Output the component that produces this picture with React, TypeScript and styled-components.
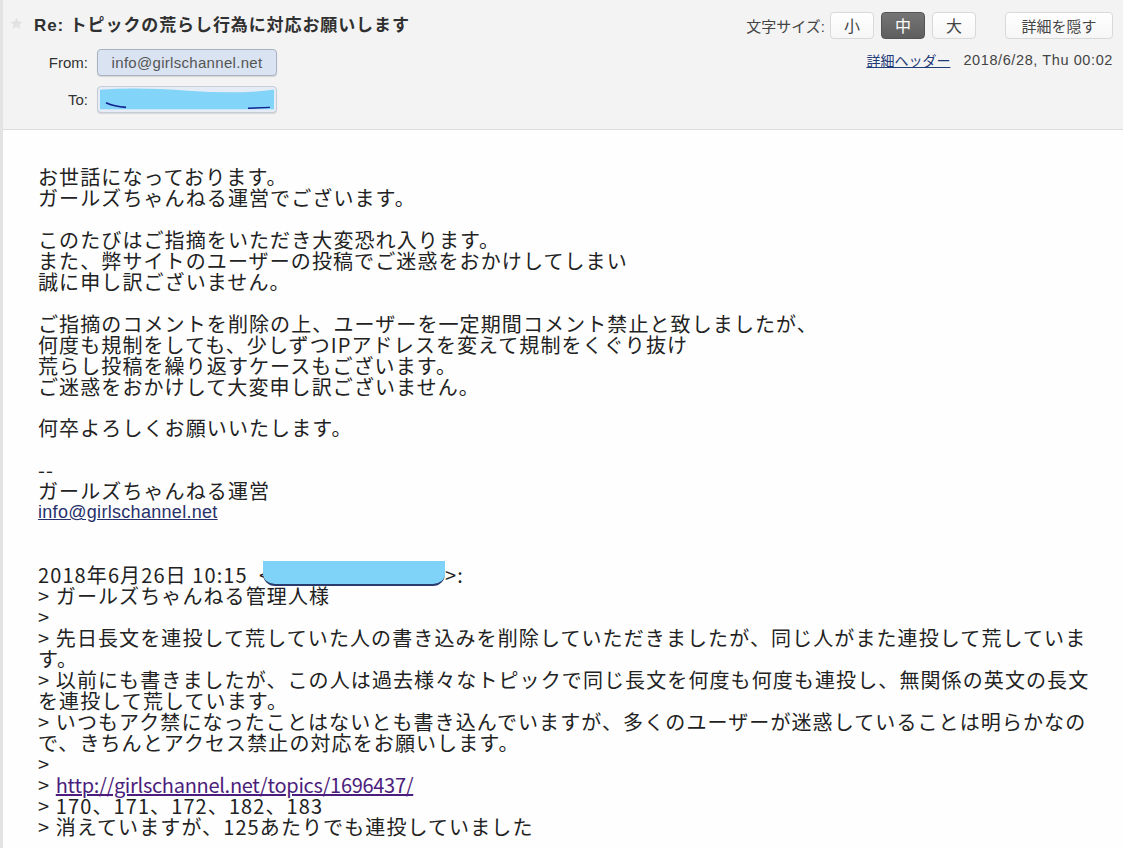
import styled, { createGlobalStyle } from "styled-components"

const GlobalStyle = createGlobalStyle`
  html, body {
    margin: 0;
    padding: 0;
    background: #fefefe;
  }
  body {
    font-family: "Liberation Sans", "Noto Sans CJK JP", sans-serif;
    color: #333;
  }
`

type SizeButtonProps = {
  $active?: boolean
}

const Star = () => (
  <StarIcon viewBox="0 0 24 24">
    <path d="M12 2.5l2.9 6.3 6.8.7-5.1 4.6 1.5 6.7L12 17.3l-6.1 3.5 1.5-6.7-5.1-4.6 6.8-.7z" />
  </StarIcon>
)

const Redaction = () => (
  <RedactSvg viewBox="0 0 178 27" preserveAspectRatio="none">
    <path d="M2 3 Q 40 0 90 4 T 176 3 L 176 24 L 2 24 Z" fill="#82d4f8" />
    <path d="M8 17 Q 16 21 28 22" stroke="#13248f" strokeWidth="2" fill="none" />
    <path d="M150 23 L 172 22" stroke="#13248f" strokeWidth="1.5" fill="none" />
  </RedactSvg>
)

export default function App() {
  return (
    <>
      <GlobalStyle />
      <Frame>
        <Header>
          <HeaderLeft>
            <TitleRow>
              <Star />
              <Title>Re: トピックの荒らし行為に対応お願いします</Title>
            </TitleRow>
            <Fields>
              <Label>From:</Label>
              <Pill>info@girlschannel.net</Pill>
              <Label>To:</Label>
              <Pill $redacted>
                <Redaction />
              </Pill>
            </Fields>
          </HeaderLeft>

          <HeaderRight>
            <Controls>
              <SizeLabel>文字サイズ:</SizeLabel>
              <SizeButton>小</SizeButton>
              <SizeButton $active>中</SizeButton>
              <SizeButton>大</SizeButton>
              <HideButton>詳細を隠す</HideButton>
            </Controls>
            <Meta>
              <HeaderLink>詳細ヘッダー</HeaderLink>
              <DateText>2018/6/28, Thu 00:02</DateText>
            </Meta>
          </HeaderRight>
        </Header>

        <Body>
          <Text>{`お世話になっております。
ガールズちゃんねる運営でございます。

このたびはご指摘をいただき大変恐れ入ります。
また、弊サイトのユーザーの投稿でご迷惑をおかけしてしまい
誠に申し訳ございません。

ご指摘のコメントを削除の上、ユーザーを一定期間コメント禁止と致しましたが、
何度も規制をしても、少しずつIPアドレスを変えて規制をくぐり抜け
荒らし投稿を繰り返すケースもございます。
ご迷惑をおかけして大変申し訳ございません。

何卒よろしくお願いいたします。

--
ガールズちゃんねる運営`}</Text>
          <SignatureMail>info@girlschannel.net</SignatureMail>
          <Text>{`

2018年6月26日 10:15  <`}<Hidden>sample@example.co.jp</Hidden>{`>:
> ガールズちゃんねる管理人様
>
> 先日長文を連投して荒していた人の書き込みを削除していただきましたが、同じ人がまた連投して荒していま
す。
> 以前にも書きましたが、この人は過去様々なトピックで同じ長文を何度も何度も連投し、無関係の英文の長文
を連投して荒しています。
> いつもアク禁になったことはないとも書き込んでいますが、多くのユーザーが迷惑していることは明らかなの
で、きちんとアクセス禁止の対応をお願いします。
>
> `}<QuoteLink>http://girlschannel.net/topics/1696437/</QuoteLink>{`
> 170、171、172、182、183
> 消えていますが、125あたりでも連投していました`}</Text>
        </Body>
      </Frame>
    </>
  )
}

const Frame = styled.div`
  min-height: 848px;
  border-left: 3px solid #e3e3e3;
  box-sizing: border-box;
  background: #fefefe;
`

const Header = styled.header`
  height: 130px;
  box-sizing: border-box;
  background: #f3f3f3;
  border-bottom: 1px solid #dcdcdc;
  display: flex;
  justify-content: space-between;
  align-items: flex-start;
  padding: 10px 10px 0 6px;
`

const HeaderLeft = styled.div`
  display: flex;
  flex-direction: column;
`

const TitleRow = styled.div`
  display: flex;
  align-items: center;
  gap: 10px;
  height: 26px;
`

const StarIcon = styled.svg`
  width: 15px;
  height: 15px;
  fill: #e2e2e2;
`

const Title = styled.h1`
  margin: 0;
  font-size: 17px;
  font-weight: bold;
  color: #303030;
  letter-spacing: 0.9px;
`

const Fields = styled.div`
  display: grid;
  grid-template-columns: 79px 180px;
  column-gap: 9px;
  row-gap: 10px;
  margin-top: 13px;
  align-items: center;
`

const Label = styled.span`
  text-align: right;
  font-size: 15px;
  color: #333;
`

const Pill = styled.div<{ $redacted?: boolean }>`
  position: relative;
  height: 27px;
  box-sizing: border-box;
  border: 1px solid ${(p) => (p.$redacted ? "#c6ccd8" : "#a9b2c2")};
  border-radius: 4px;
  background: ${(p) => (p.$redacted ? "#e6ecf6" : "#d9e3f1")};
  box-shadow: 0 1px 1px rgba(0, 0, 0, 0.12);
  color: #555;
  font-size: 15px;
  letter-spacing: 0.3px;
  display: flex;
  align-items: center;
  justify-content: center;
  overflow: hidden;
`

const RedactSvg = styled.svg`
  position: absolute;
  inset: 0;
  width: 100%;
  height: 100%;
`

const HeaderRight = styled.div`
  display: flex;
  flex-direction: column;
  align-items: flex-end;
`

const Controls = styled.div`
  display: flex;
  align-items: center;
  gap: 7px;
  height: 30px;
`

const SizeLabel = styled.span`
  font-size: 15px;
  color: #444;
  margin-right: -2px;
`

const SizeButton = styled.button<SizeButtonProps>`
  width: 44px;
  height: 27px;
  border-radius: 4px;
  font-family: "Noto Sans CJK JP", sans-serif;
  font-size: 16px;
  padding: 0;
  line-height: 1;
  border: 1px solid ${(p) => (p.$active ? "#555" : "#d9d9d9")};
  background: ${(p) =>
    p.$active ? "linear-gradient(#757575, #5e5e5e)" : "linear-gradient(#ffffff, #f6f6f6)"};
  color: ${(p) => (p.$active ? "#fff" : "#444")};
`

const HideButton = styled.button`
  margin-left: 22px;
  width: 108px;
  height: 27px;
  border-radius: 4px;
  border: 1px solid #d9d9d9;
  background: linear-gradient(#ffffff, #f6f6f6);
  font-family: "Noto Sans CJK JP", sans-serif;
  font-size: 15px;
  color: #444;
  padding: 0;
`

const Meta = styled.div`
  display: flex;
  align-items: center;
  gap: 13px;
  margin-top: 10px;
  font-size: 14px;
`

const HeaderLink = styled.a`
  color: #1f3b78;
  text-decoration: underline;
`

const DateText = styled.span`
  color: #444;
  font-size: 14.5px;
  letter-spacing: 0.6px;
`

const Body = styled.main`
  padding: 37px 20px 0 35px;
`

const Text = styled.div`
  white-space: pre;
  font-family: "Noto Sans CJK JP", sans-serif;
  font-size: 20px;
  line-height: 20.95px;
  color: #222;
  letter-spacing: 1.1px;
`

const SignatureMail = styled.a`
  display: block;
  font-family: "Liberation Sans", sans-serif;
  font-size: 18px;
  line-height: 20.95px;
  letter-spacing: 0.3px;
  color: #27306a;
  text-decoration: underline;
`

const Hidden = styled.span`
  display: inline-block;
  width: 182px;
  height: 21px;
  margin-left: -8px;
  vertical-align: top;
  border-radius: 0 0 12px 12px;
  background: #7fd3f8;
  box-shadow: 0 -4px 0 #7fd3f8;
  color: transparent;
  font-size: 1px;
  line-height: 1px;
  border-bottom: 2px solid #2a3c6e;
  box-sizing: border-box;
`

const QuoteLink = styled.a`
  color: #4b1d7c;
  text-decoration: underline;
  letter-spacing: -0.3px;
`
